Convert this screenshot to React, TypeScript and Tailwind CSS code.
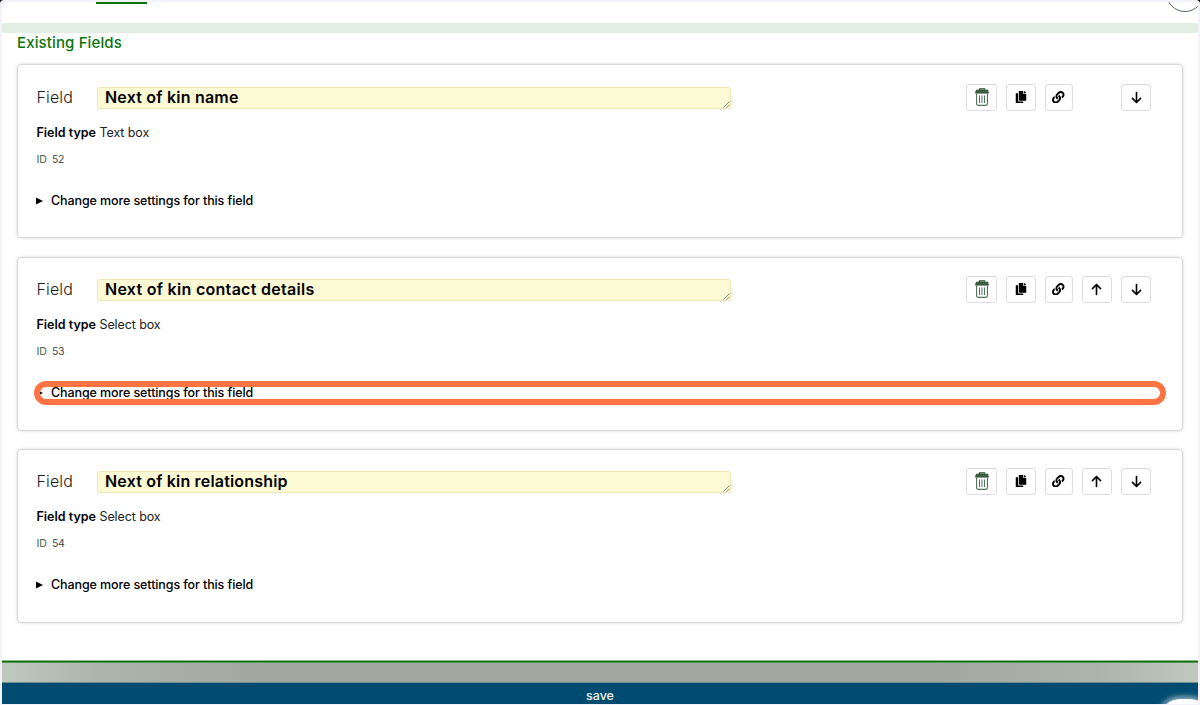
import type { ReactNode } from 'react';
import { FaCopy, FaLink } from 'react-icons/fa';
import { FaArrowDown, FaArrowUp } from 'react-icons/fa6';

type Field = { id: number; name: string; type: string; first?: boolean; highlighted?: boolean; nameClass: string; cardClass: string; typeClass: string };

const fields: Field[] = [
  { id: 52, name: 'Next of kin name', type: 'Text box', first: true, nameClass: 'tracking-[0.21px]', cardClass: 'h-[174px] mb-[19px] pt-[18px]', typeClass: 'mt-[12px]' },
  { id: 53, name: 'Next of kin contact details', type: 'Select box', highlighted: true, nameClass: 'tracking-[0.29px]', cardClass: 'h-[174px] mb-[18px] pt-[17px]', typeClass: 'mt-[12px]' },
  { id: 54, name: 'Next of kin relationship', type: 'Select box', nameClass: 'tracking-[0.18px]', cardClass: 'h-[174px] pt-[17px]', typeClass: 'mt-[12px]' },
];

function TrashIcon() {
  return (
    <svg width="14" height="18" viewBox="0 0 14 18" fill="none">
      <path d="M4.5 2V.8h5V2" stroke="#294d2e" strokeWidth="1.2" />
      <path d="M1.2 2h11.6l.8 3.2H.4z" fill="#3f6244" stroke="#294d2e" strokeWidth=".6" />
      <path d="M1.6 5.5v10.2q0 1.7 1.7 1.7h7.4q1.7 0 1.7-1.7V5.5" stroke="#52705a" strokeWidth="1.1" />
      <path d="M4.5 7.5v7.5M7 7.5v7.5M9.5 7.5v7.5" stroke="#52705a" strokeWidth="1" />
    </svg>
  );
}

function IconButton({ label, className, children }: { label: string; className: string; children: ReactNode }) {
  return (
    <button aria-label={label} className={`flex h-[27px] shrink-0 items-center justify-center rounded-[3px] border border-[#dcdcdc] bg-white text-black ${className}`}>
      {children}
    </button>
  );
}

function FieldCard({ field }: { field: Field }) {
  return (
    <section className={`relative flex flex-col rounded-[4px] border border-[#d8d8d8] pr-[31px] pl-[18.5px] shadow-[0_0_3px_rgba(0,0,0,0.18)] ${field.cardClass}`}>
      <div className="flex h-[28px] items-center">
        <span className="w-[60.5px] text-[16px] leading-5 font-light tracking-[0.12px] text-[#222]">Field</span>
        <div className="relative mt-px flex h-[22px] w-[634px] items-center rounded-[3px] border border-[#f0e3b4] bg-[#fcf9d5] pb-[2px] pl-[7px]">
          <span className={`text-[16px] leading-[18px] font-semibold text-black ${field.nameClass}`}>{field.name}</span>
          <svg className="absolute right-0 bottom-0" width="7" height="7" viewBox="0 0 7 7">
            <path d="M.5 6.5l6-6M3.7 6.5l2.8-2.8" stroke="#777" strokeWidth=".9" />
          </svg>
        </div>
        <div className="ml-auto flex items-center">
          <IconButton label="Delete" className="mr-[9px] w-[31px]"><TrashIcon /></IconButton>
          <IconButton label="Copy" className="mr-[9px] w-[30px]"><FaCopy size={12} /></IconButton>
          <IconButton label="Link" className="w-[28px] pr-px"><FaLink size={12.5} /></IconButton>
          {field.first ? <span className="w-[39px]" /> : <IconButton label="Move up" className="ml-[9px] w-[30px] pr-px"><FaArrowUp size={13} /></IconButton>}
          <IconButton label="Move down" className="ml-[9px] w-[30px]"><FaArrowDown size={13} /></IconButton>
        </div>
      </div>
      <p className={`h-5 text-[12.5px] leading-5 text-[#222] ${field.typeClass}`}>
        <span className="font-semibold text-black">Field type</span> <span className="tracking-[-0.1px]">{field.type}</span>
      </p>
      <p className="mt-[7px] h-5 text-[10.5px] leading-5 text-[#444]">
        <span className="mr-[5px] text-[#416447]">ID</span><span className="tracking-[-0.2px]">{field.id}</span>
      </p>
      <div className="mt-[21px] flex h-5 items-center">
        <svg className="-ml-[0.5px]" width="7" height="8" viewBox="0 0 7 8"><path d="M0 .5L7 4 0 7.5z" fill="#000" /></svg>
        <span className="ml-[8px] text-[12.5px] leading-5 font-medium tracking-[-0.1px] text-black">Change more settings for this field</span>
      </div>
      {field.highlighted && <div className="absolute top-[123px] left-[16px] h-6 w-[1132px] rounded-[12px] border-[6px] border-[#ff7442]" />}
    </section>
  );
}

export default function App() {
  return (
    <div className="h-[705px] w-[1200px] overflow-hidden bg-black font-['Inter',sans-serif]">
      <div className="h-full overflow-hidden rounded-t-[4px] bg-[#f2f2f8] px-[2px] pt-[2px] pb-[1px]">
        <div className="relative flex h-full flex-col overflow-hidden rounded-t-[6px] bg-white">
          <header className="h-[21px] shrink-0">
            <div className="ml-[94px] h-[2px] w-[51px] bg-[#0b750b]" />
            <div className="absolute -top-[28px] right-[-6px] h-[38px] w-[38px] rounded-full border border-[#536b57]" />
          </header>
          <div className="h-[10px] shrink-0 bg-[#e3eee2]" />
          <main className="flex h-[627px] shrink-0 flex-col px-[15px]">
            <h1 className="h-5 text-[15px] leading-5 font-medium tracking-[0.13px] text-[#0b750b]">Existing Fields</h1>
            <div className="mt-[11px] flex flex-col">
              {fields.map((field) => <FieldCard key={field.id} field={field} />)}
            </div>
          </main>
          <div className="h-[3px] shrink-0 border-t border-b border-t-[#91b891] border-b-[#56915a] bg-[#087008]" />
          <div className="h-[20px] shrink-0 border-b border-[#718b91] bg-[linear-gradient(90deg,#c1cabf_0%,#adb4ab_8%,#a2a8a0_22%,#a2a8a0_78%,#adb4ab_92%,#c1cabf_100%)]" />
          <button className="h-[25px] shrink-0 bg-[#004b70] text-[12.5px] leading-6 font-medium text-[#f5f2ea]">save</button>
          <div className="absolute right-[-12px] bottom-[-37px] h-[42px] w-[50px] rounded-[20px] bg-white shadow-[0_0_5px_3px_rgba(255,255,255,0.5)]" />
        </div>
      </div>
    </div>
  );
}
